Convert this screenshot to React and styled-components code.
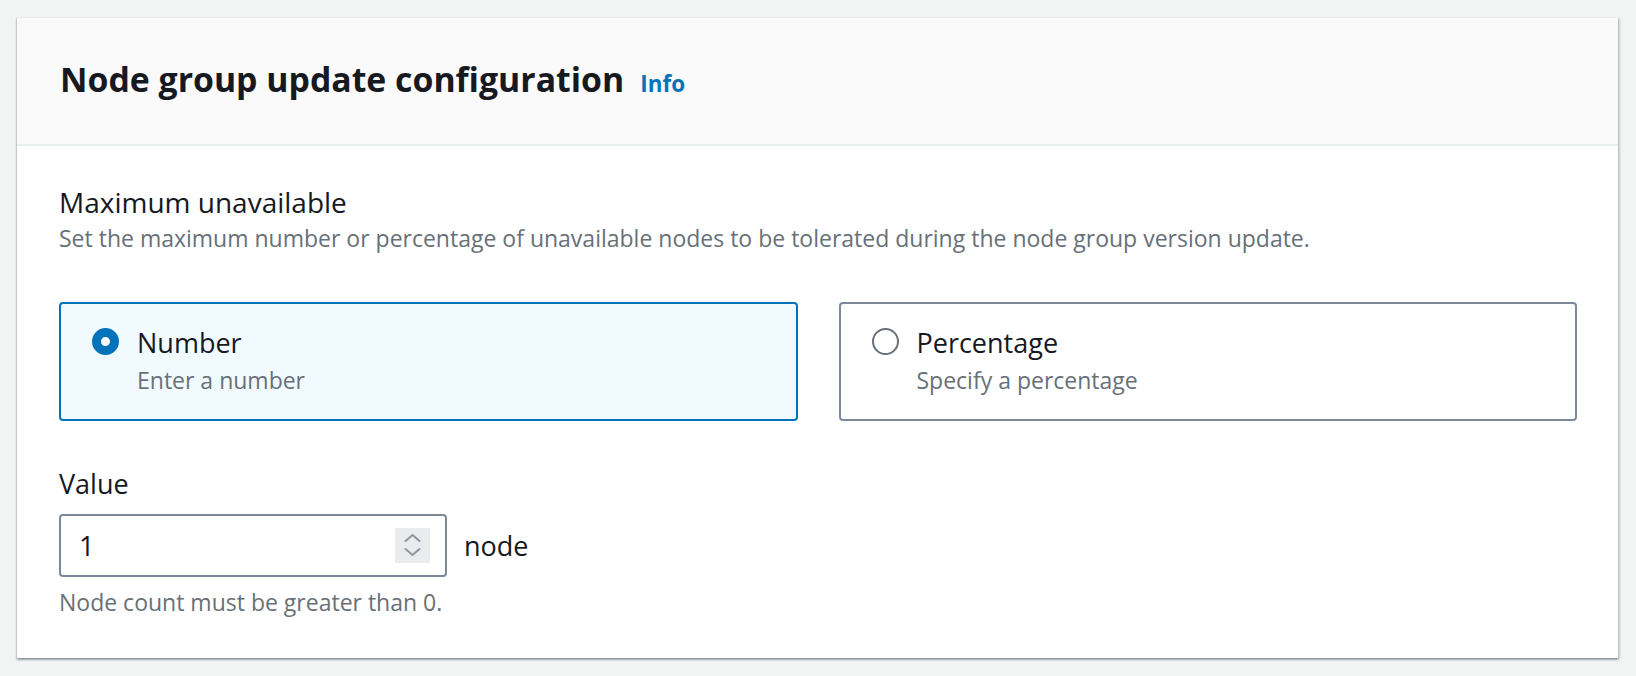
import React, { useState } from 'react';
import styled, { createGlobalStyle } from 'styled-components';

const GlobalStyle = createGlobalStyle`
  body {
    margin: 0;
    background: #f2f3f3;
    font-family: "Open Sans", "Liberation Sans", sans-serif;
    color: #16191f;
  }
`;

const Page = styled.div`
  padding: 17px 18px 18px 17px;
`;

const Container = styled.section`
  background: #ffffff;
  border-top: 1px solid #eaeded;
  box-shadow: 0 2px 2px 0 rgba(0, 28, 36, 0.3), 2px 1px 2px 0 rgba(0, 28, 36, 0.15),
    -1px 1px 1px 0 rgba(0, 28, 36, 0.1);
`;

const Header = styled.div`
  box-sizing: border-box;
  height: 128px;
  display: flex;
  align-items: center;
  padding: 0 43px 5px;
  background: #fafafa;
  border-bottom: 2px solid #eaeded;
`;

const TitleRow = styled.div`
  display: flex;
  align-items: baseline;
`;

const Title = styled.h2`
  margin: 0;
  font-size: 33.8px;
  line-height: 44px;
  font-weight: 700;
  color: #16191f;
`;

const InfoLink = styled.a`
  margin-left: 16px;
  font-size: 22.5px;
  font-weight: 700;
  color: #0073bb;
  text-decoration: none;
  cursor: pointer;
`;

const Body = styled.div`
  padding: 40px 41px 41px 42px;
`;

const FieldLabel = styled.div`
  font-size: ${(p) => p.$size || 27}px;
  line-height: 32px;
  color: #16191f;
`;

const Description = styled.div`
  margin-top: ${(p) => p.$gap || 0}px;
  font-size: 23px;
  line-height: 30px;
  color: #687078;
`;

const TileGrid = styled.div`
  display: grid;
  grid-template-columns: 1fr 1fr;
  gap: 41px;
  margin-top: 49px;
`;

const Tile = styled.label`
  display: flex;
  align-items: flex-start;
  gap: 18px;
  padding: 23px 30px 24px 31px;
  border: 2px solid ${(p) => (p.$selected ? '#0073bb' : '#7d8998')};
  border-radius: 4px;
  background: ${(p) => (p.$selected ? '#f1faff' : '#ffffff')};
  cursor: pointer;
`;

const Radio = styled.span`
  flex: none;
  box-sizing: border-box;
  width: 27px;
  height: 27px;
  margin-top: 1px;
  border-radius: 50%;
  background: #ffffff;
  border: ${(p) => (p.$checked ? '9px solid #0073bb' : '2px solid #687078')};
`;

const TileText = styled.div`
  display: flex;
  flex-direction: column;
`;

const ValueField = styled.div`
  margin-top: 47px;
`;

const InputRow = styled.div`
  display: flex;
  align-items: center;
  gap: 17px;
  margin-top: 14px;
`;

const InputBox = styled.div`
  box-sizing: border-box;
  width: 388px;
  height: 63px;
  display: flex;
  align-items: center;
  padding: 0 15px 0 18px;
  border: 2px solid #7d8998;
  border-radius: 4px;
  background: #ffffff;
`;

const NumberInput = styled.input`
  flex: 1;
  min-width: 0;
  border: none;
  outline: none;
  padding: 0;
  background: transparent;
  font-family: inherit;
  font-size: 27px;
  color: #16191f;
`;

const Spinner = styled.div`
  flex: none;
  width: 35px;
  height: 35px;
  background: #e9ebed;
  display: flex;
  align-items: center;
  justify-content: center;
`;

const Unit = styled.span`
  font-size: 27px;
  line-height: 32px;
  color: #16191f;
`;

const options = [
  { id: 'number', label: 'Number', description: 'Enter a number' },
  { id: 'percentage', label: 'Percentage', description: 'Specify a percentage' },
];

export default function App() {
  const [mode, setMode] = useState('number');
  const [value, setValue] = useState('1');

  return (
    <>
      <GlobalStyle />
      <Page>
        <Container>
          <Header>
            <TitleRow>
              <Title>Node group update configuration</Title>
              <InfoLink>Info</InfoLink>
            </TitleRow>
          </Header>
          <Body>
            <FieldLabel $size={28}>Maximum unavailable</FieldLabel>
            <Description $gap={5}>
              Set the maximum number or percentage of unavailable nodes to be tolerated during the node group version update.
            </Description>

            <TileGrid>
              {options.map((o) => (
                <Tile key={o.id} $selected={mode === o.id} onClick={() => setMode(o.id)}>
                  <Radio $checked={mode === o.id} />
                  <TileText>
                    <FieldLabel>{o.label}</FieldLabel>
                    <Description $gap={6}>{o.description}</Description>
                  </TileText>
                </Tile>
              ))}
            </TileGrid>

            <ValueField>
              <FieldLabel>Value</FieldLabel>
              <InputRow>
                <InputBox>
                  <NumberInput value={value} onChange={(e) => setValue(e.target.value)} />
                  <Spinner>
                    <svg width="35" height="35" viewBox="0 0 35 35" fill="none">
                      <polyline points="10.5,13 17.5,7 24.5,13" stroke="#8d969f" strokeWidth="2" strokeLinecap="round" strokeLinejoin="round" />
                      <polyline points="10.5,21 17.5,27 24.5,21" stroke="#8d969f" strokeWidth="2" strokeLinecap="round" strokeLinejoin="round" />
                    </svg>
                  </Spinner>
                </InputBox>
                <Unit>{mode === 'number' ? 'node' : '%'}</Unit>
              </InputRow>
              <Description $gap={10}>Node count must be greater than 0.</Description>
            </ValueField>
          </Body>
        </Container>
      </Page>
    </>
  );
}
